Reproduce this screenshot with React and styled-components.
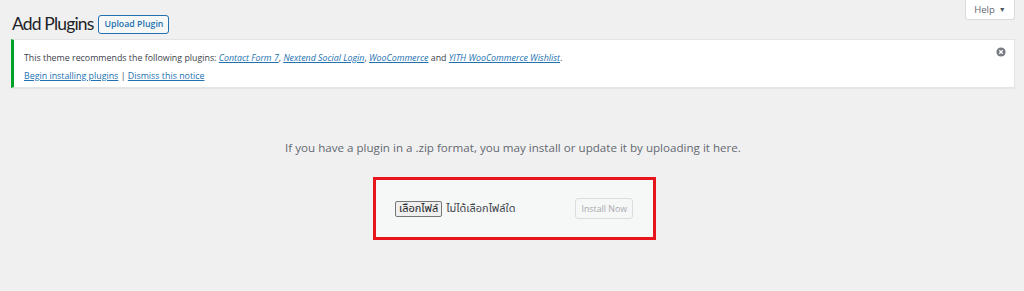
import React from "react";
import styled, { createGlobalStyle } from "styled-components";

const Global = createGlobalStyle`
  html, body { margin: 0; padding: 0; background: #f0f0f1; }
  body { font-family: "Open Sans", "Noto Sans", "Noto Sans Thai", sans-serif; color: #3c434a; }
  * { box-sizing: border-box; }
`;

const Wrap = styled.div`
  padding: 0 9px 0 11px;
  width: 1024px;
  height: 291px;
`;

const TopRow = styled.div`
  display: flex;
  justify-content: space-between;
  align-items: flex-start;
  height: 39px;
`;

const TitleGroup = styled.div`
  display: flex;
  align-items: center;
  gap: 5px;
  padding: 14px 0 0 1px;
`;

const Title = styled.h1`
  margin: 0;
  font-family: "Lato", "Open Sans", sans-serif;
  font-size: 17.5px;
  letter-spacing: -0.85px;
  font-weight: 400;
  line-height: 20px;
  color: #1d2327;
`;

const OutlineButton = styled.button`
  font-family: inherit;
  height: 19px;
  padding: 0 5px;
  font-size: 8.8px;
  font-weight: 600;
  color: #2271b1;
  background: #f6f7f7;
  border: 1px solid #2271b1;
  border-radius: 3px;
  line-height: 17px;
`;

const HelpTab = styled.div`
  width: 50px;
  height: 20px;
  background: #fff;
  border: 1px solid #dcdcde;
  border-top: none;
  border-radius: 0 0 3px 3px;
  display: flex;
  align-items: center;
  justify-content: center;
  gap: 4px;
  font-size: 9.5px;
  color: #646970;
`;

const Caret = styled.span`
  font-size: 7px;
  color: #50575e;
`;

const Notice = styled.div`
  position: relative;
  background: #fff;
  border: 1px solid #e5e5e5;
  border-left: 3px solid #00a32a;
  height: 49px;
  padding: 9px 12px 0 10px;
  font-size: 8.85px;
  line-height: 18px;
  box-shadow: 0 1px 1px rgba(0,0,0,0.04);
`;

const Line = styled.p`
  margin: 0;
`;

const Link = styled.a`
  color: #2271b1;
  text-decoration: underline;
  font-style: ${p => (p.$italic ? "italic" : "normal")};
`;

const Dismiss = styled.span`
  position: absolute;
  top: 7px;
  right: 8px;
  width: 10px;
  height: 10px;
  display: flex;
`;

const UploadArea = styled.div`
  display: flex;
  flex-direction: column;
  align-items: center;
  padding-top: 50px;
`;

const Help = styled.p`
  margin: 0;
  font-size: 11.6px;
  line-height: 20px;
  color: #646970;
`;

const UploadForm = styled.div`
  margin-top: 19px;
  margin-left: 3px;
  width: 283px;
  height: 63px;
  background: #f6f7f7;
  border: 3px solid #e8141b;
  display: flex;
  align-items: center;
  justify-content: space-between;
  padding: 0 20px 0 19px;
`;

const FilePick = styled.div`
  display: flex;
  align-items: center;
  gap: 4px;
`;

const FileButton = styled.button`
  font-family: "Noto Sans Thai", "Noto Sans", sans-serif;
  height: 16px;
  padding: 0 3px;
  font-size: 11px;
  line-height: 14px;
  color: #1d2327;
  background: #efefef;
  border: 1px solid #767676;
  border-radius: 2px;
`;

const FileName = styled.span`
  font-family: "Noto Sans Thai", "Noto Sans", sans-serif;
  font-size: 11px;
  color: #3c434a;
`;

const DisabledButton = styled.button`
  font-family: inherit;
  height: 21px;
  padding: 0 5px;
  font-size: 8.8px;
  color: #a7aaad;
  background: #f6f7f7;
  border: 1px solid #dcdcde;
  border-radius: 3px;
`;

export default function App() {
  return (
    <>
      <Global />
      <Wrap>
        <TopRow>
          <TitleGroup>
            <Title>Add Plugins</Title>
            <OutlineButton>Upload Plugin</OutlineButton>
          </TitleGroup>
          <HelpTab>
            Help <Caret>▼</Caret>
          </HelpTab>
        </TopRow>
        <Notice>
          <Line>
            This theme recommends the following plugins:{" "}
            <Link $italic href="#">Contact Form 7</Link>,{" "}
            <Link $italic href="#">Nextend Social Login</Link>,{" "}
            <Link $italic href="#">WooCommerce</Link> and{" "}
            <Link $italic href="#">YITH WooCommerce Wishlist</Link>.
          </Line>
          <Line>
            <Link href="#">Begin installing plugins</Link> |{" "}
            <Link href="#">Dismiss this notice</Link>
          </Line>
          <Dismiss>
            <svg width="10" height="10" viewBox="0 0 10 10">
              <circle cx="5" cy="5" r="4.6" fill="#787c82" />
              <path d="M3.3 3.3 L6.7 6.7 M6.7 3.3 L3.3 6.7" stroke="#fff" strokeWidth="1.3" />
            </svg>
          </Dismiss>
        </Notice>
        <UploadArea>
          <Help>If you have a plugin in a .zip format, you may install or update it by uploading it here.</Help>
          <UploadForm>
            <FilePick>
              <FileButton>เลือกไฟล์</FileButton>
              <FileName>ไม่ได้เลือกไฟล์ใด</FileName>
            </FilePick>
            <DisabledButton disabled>Install Now</DisabledButton>
          </UploadForm>
        </UploadArea>
      </Wrap>
    </>
  );
}
